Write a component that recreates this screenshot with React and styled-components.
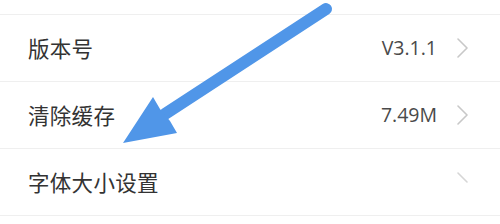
import React from "react";
import styled, { createGlobalStyle } from "styled-components";

const Global = createGlobalStyle`
  html, body { margin: 0; padding: 0; background: #fff; }
  body { font-family: "Noto Sans CJK SC", "Noto Sans", sans-serif; }
`;

const Page = styled.div`
  position: relative;
  width: 500px;
  height: 224px;
  overflow: hidden;
  background: #fff;
`;

const TopGap = styled.div`
  height: 14px;
  border-bottom: 1px solid #efefef;
`;

const List = styled.div`
  display: flex;
  flex-direction: column;
`;

const Row = styled.div`
  height: 66px;
  display: flex;
  align-items: center;
  padding: 0 32px 0 28px;
  border-bottom: 1px solid #efefef;
`;

const Label = styled.div`
  flex: 1;
  font-size: 21.5px;
  color: #333;
  letter-spacing: 0.3px;
  line-height: 1;
`;

const Value = styled.div`
  font-family: "Open Sans", "Liberation Sans", sans-serif;
  font-size: 19.5px;
  color: #4a4a4a;
  margin-right: 20px;
  line-height: 1;
`;

const ChevronWrap = styled.svg`
  width: 11px;
  height: 20px;
  flex: none;
`;

const Overlay = styled.svg`
  position: absolute;
  left: 0;
  top: 0;
  width: 500px;
  height: 224px;
  pointer-events: none;
`;

function Chevron({ partial }) {
  return (
    <ChevronWrap viewBox="0 0 11 20">
      <path
        d={partial ? "M1 1 L10 10" : "M1 1 L10 10 L1 19"}
        fill="none"
        stroke={partial ? "#d6d6d6" : "#c8c8c8"}
        strokeWidth="1.6"
        strokeLinecap="round"
        strokeLinejoin="round"
      />
    </ChevronWrap>
  );
}

const items = [
  { label: "版本号", value: "V3.1.1" },
  { label: "清除缓存", value: "7.49M" },
  { label: "字体大小设置", value: "", partial: true },
];

export default function App() {
  return (
    <Page>
      <Global />
      <TopGap />
      <List>
        {items.map((it) => (
          <Row key={it.label}>
            <Label>{it.label}</Label>
            {it.value && <Value>{it.value}</Value>}
            <Chevron partial={it.partial} />
          </Row>
        ))}
      </List>
      <Overlay viewBox="0 0 500 224">
        <line x1="326" y1="9" x2="165" y2="114" stroke="#5096e8" strokeWidth="12" strokeLinecap="round" />
        <polygon points="123,143 153,97 160,109 170,121 177,133" fill="#5096e8" />
      </Overlay>
    </Page>
  );
}
